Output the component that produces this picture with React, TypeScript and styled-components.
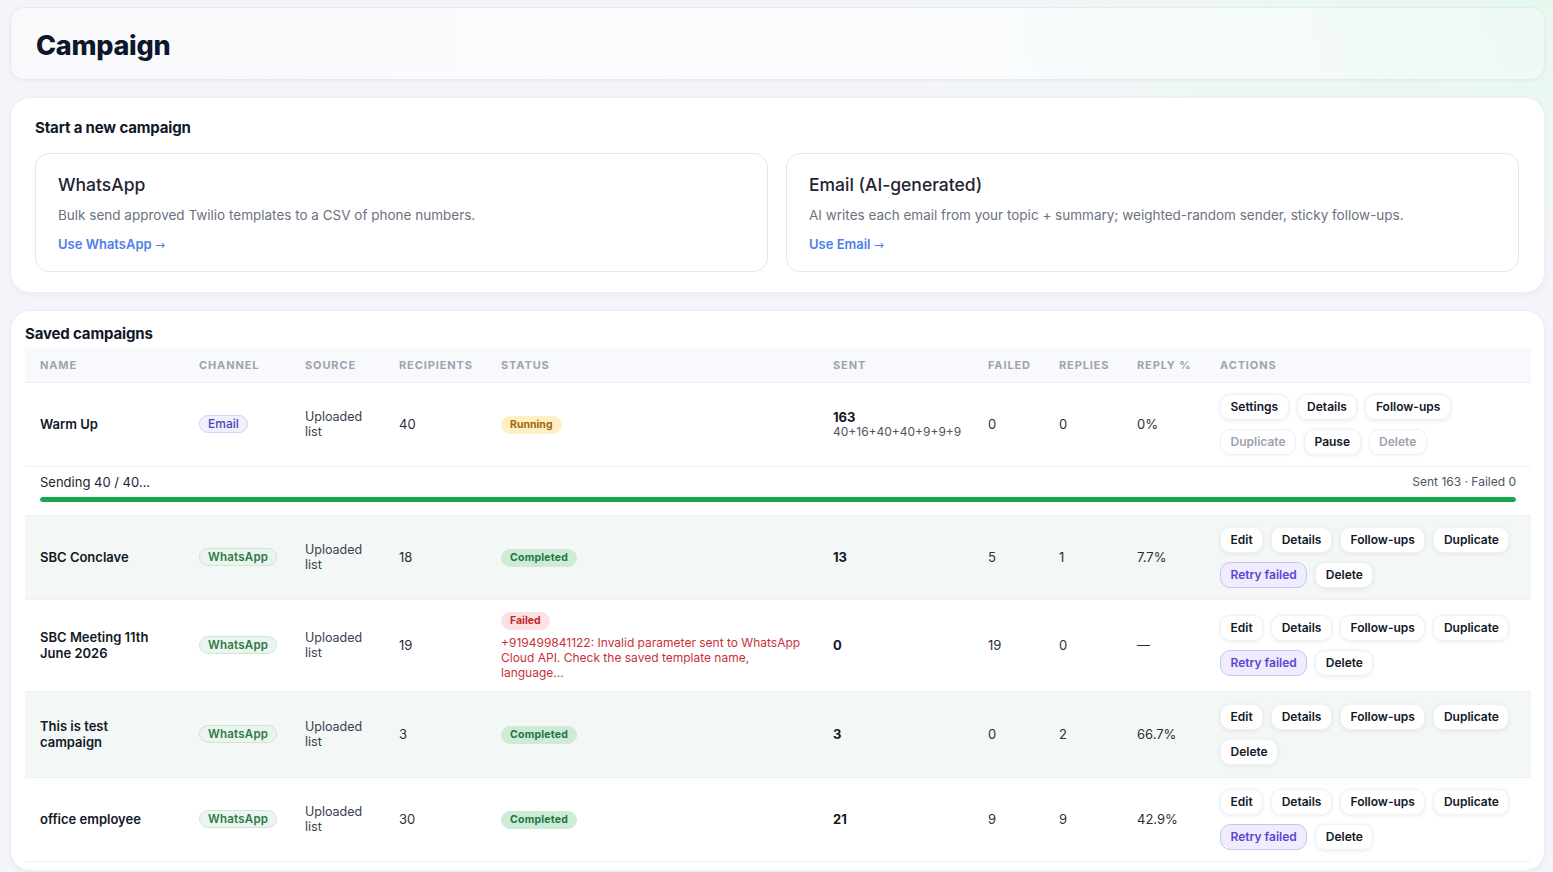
import React from "react";
import styled, { createGlobalStyle, css } from "styled-components";

const GlobalStyle = createGlobalStyle`
  * { box-sizing: border-box; }
  html, body { margin: 0; padding: 0; }
  body {
    font-family: Inter, "Noto Sans", Arial, sans-serif;
    color: #111827;
    background:
      radial-gradient(ellipse 700px 260px at 100% 0%, #e6f8ee 0%, rgba(230,248,238,0) 100%),
      #f4f5fa;
    min-height: 100vh;
  }
`;

const Page = styled.div`
  display: flex;
  flex-direction: column;
  gap: 17px;
  padding: 7px 8px 0 10px;
`;

const HeaderCard = styled.header`
  height: 73px;
  display: flex;
  align-items: center;
  padding: 4px 25px 0;
  border-radius: 14px;
  border: 1px solid #e7e9f0;
  background: linear-gradient(90deg, rgba(250,250,253,0.9) 0%, rgba(251,252,253,0.9) 60%, rgba(240,250,245,0.85) 100%);
  box-shadow: 0 1px 3px rgba(20, 30, 60, 0.05);
`;

const Title = styled.h1`
  margin: 0;
  font-size: 27px;
  font-weight: 800;
  letter-spacing: -0.01em;
  color: #0f172a;
`;

const Card = styled.section<{ $pad: string }>`
  background: #ffffff;
  border: 1px solid #eceef3;
  border-radius: 20px;
  box-shadow: 0 2px 6px rgba(20, 30, 60, 0.04);
  padding: ${(p) => p.$pad};
`;

const SectionTitle = styled.h2`
  margin: 0;
  font-size: 15px;
  line-height: 18px;
  font-weight: 700;
  letter-spacing: -0.01em;
  color: #111827;
`;

const OptionGrid = styled.div`
  display: grid;
  grid-template-columns: 1fr 1fr;
  gap: 18px;
  margin-top: 16px;
`;

const Option = styled.div`
  border: 1px solid #e6e8ee;
  border-radius: 14px;
  padding: 20px 22px 19px;
  height: 119px;
`;

const OptionTitle = styled.div`
  font-size: 17.5px;
  line-height: 22px;
  font-weight: 500;
  color: #1f2433;
`;

const OptionDesc = styled.div`
  margin-top: 9px;
  font-size: 13.5px;
  line-height: 20px;
  color: #6b7280;
`;

const OptionLink = styled.a`
  display: inline-block;
  margin-top: 10px;
  font-size: 13px;
  line-height: 18px;
  font-weight: 600;
  color: #4d7ee8;
  text-decoration: none;
`;

const Arrow = styled.span`
  font-family: "Noto Sans", "DejaVu Sans", sans-serif;
  font-weight: 400;
  font-size: 12px;
`;

const Table = styled.table`
  width: 100%;
  margin-top: 5px;
  border-collapse: collapse;
  table-layout: fixed;
`;

const Th = styled.th`
  height: 34px;
  padding: 0 15px;
  text-align: left;
  font-size: 11px;
  font-weight: 700;
  letter-spacing: 0.08em;
  color: #9ca3af;
  background: #f8f9fc;
  border-bottom: 1px solid #eceef3;
  white-space: nowrap;
`;

const Tr = styled.tr<{ $tint?: boolean }>`
  background: ${(p) => (p.$tint ? "#f3f7f5" : "#ffffff")};
  border-bottom: 1px solid #eef0f3;
`;

const Td = styled.td<{ $pad?: string }>`
  padding: ${(p) => p.$pad || "11px 15px"};
  vertical-align: middle;
  font-size: 13px;
  line-height: 16px;
  color: #2b2f38;
`;

const Name = styled.div`
  font-size: 13px;
  line-height: 16px;
  font-weight: 600;
  color: #111827;
`;

const Source = styled.div`
  font-size: 12.5px;
  line-height: 15px;
  color: #374151;
`;

type Tone = "email" | "whatsapp" | "running" | "completed" | "failed";

const tones: Record<Tone, ReturnType<typeof css>> = {
  email: css`
    background: #eef0fc;
    border-color: #cfd3f3;
    color: #4c44b8;
    font-weight: 500;
    font-size: 12px;
  `,
  whatsapp: css`
    background: #eaf5ee;
    border-color: #cfe5d6;
    color: #2f7a4a;
    font-weight: 600;
    font-size: 11.5px;
    letter-spacing: 0.02em;
  `,
  running: css`
    background: #fdf0c4;
    border-color: #fdf0c4;
    color: #a5650a;
    font-weight: 700;
    font-size: 10.5px;
  `,
  completed: css`
    background: #cdebd6;
    border-color: #cdebd6;
    color: #1d7641;
    font-weight: 700;
    font-size: 10.5px;
    letter-spacing: 0.02em;
  `,
  failed: css`
    background: #fde1e2;
    border-color: #fde1e2;
    color: #c0262d;
    font-weight: 700;
    font-size: 10.5px;
  `,
};

const Badge = styled.span<{ $tone: Tone }>`
  display: inline-flex;
  align-items: center;
  height: 18px;
  padding: 0 8px;
  border-radius: 999px;
  border: 1px solid transparent;
  white-space: nowrap;
  ${(p) => tones[p.$tone]}
`;

const ErrorText = styled.div`
  margin-top: 5px;
  font-size: 12px;
  line-height: 15px;
  color: #c7323a;
`;

const SentMain = styled.div`
  font-size: 13px;
  line-height: 16px;
  font-weight: 700;
  color: #111827;
`;

const SentSub = styled.div`
  font-size: 12px;
  line-height: 14px;
  color: #4b5563;
`;

const Actions = styled.div`
  display: flex;
  flex-wrap: wrap;
  gap: 9px 8px;
`;

type BtnKind = "default" | "muted" | "retry";

const Btn = styled.button<{ $kind?: BtnKind }>`
  height: 26px;
  padding: 0 9.5px;
  border-radius: 10px;
  font-family: inherit;
  font-size: 12px;
  font-weight: 600;
  white-space: nowrap;
  cursor: pointer;
  border: 1px solid #f0f1f4;
  background: #ffffff;
  color: #111827;
  box-shadow: 0 1px 4px rgba(20, 30, 60, 0.08);
  ${(p) =>
    p.$kind === "muted" &&
    css`
      color: #9ca3af;
      box-shadow: 0 1px 3px rgba(20, 30, 60, 0.04);
    `}
  ${(p) =>
    p.$kind === "retry" &&
    css`
      background: #efedfd;
      border-color: #cbc3f5;
      color: #5a45d4;
      box-shadow: none;
    `}
`;

const ProgressHead = styled.div`
  display: flex;
  justify-content: space-between;
  align-items: center;
`;

const ProgressLabel = styled.span`
  font-size: 13px;
  line-height: 16px;
  color: #1f2430;
`;

const ProgressMeta = styled.span`
  font-size: 12px;
  line-height: 16px;
  color: #4b5563;
`;

const Track = styled.div`
  margin-top: 7px;
  height: 5px;
  border-radius: 999px;
  background: #e5e7eb;
  overflow: hidden;
`;

const Fill = styled.div`
  height: 100%;
  border-radius: 999px;
  background: #18a64f;
`;

type Row = {
  name: string;
  recipients: number;
  status: "completed" | "failed";
  error?: string;
  sent: number;
  failed: number;
  replies: number;
  rate: string;
  retry: boolean;
  tint: boolean;
};

const rows: Row[] = [
  { name: "SBC Conclave", recipients: 18, status: "completed", sent: 13, failed: 5, replies: 1, rate: "7.7%", retry: true, tint: true },
  {
    name: "SBC Meeting 11th June 2026",
    recipients: 19,
    status: "failed",
    error: "+919499841122: Invalid parameter sent to WhatsApp Cloud API. Check the saved template name, language...",
    sent: 0,
    failed: 19,
    replies: 0,
    rate: "—",
    retry: true,
    tint: false,
  },
  { name: "This is test campaign", recipients: 3, status: "completed", sent: 3, failed: 0, replies: 2, rate: "66.7%", retry: false, tint: true },
  { name: "office employee", recipients: 30, status: "completed", sent: 21, failed: 9, replies: 9, rate: "42.9%", retry: true, tint: false },
];

const widths = [159, 106, 94, 102, 332, 155, 71, 78, 83, 326];
const heads = ["NAME", "CHANNEL", "SOURCE", "RECIPIENTS", "STATUS", "SENT", "FAILED", "REPLIES", "REPLY %", "ACTIONS"];

export default function App() {
  const progress = 100;
  return (
    <>
      <GlobalStyle />
      <Page>
        <HeaderCard>
          <Title>Campaign</Title>
        </HeaderCard>

        <Card $pad="21px 25px 20px 24px">
          <SectionTitle>Start a new campaign</SectionTitle>
          <OptionGrid>
            <Option>
              <OptionTitle>WhatsApp</OptionTitle>
              <OptionDesc>Bulk send approved Twilio templates to a CSV of phone numbers.</OptionDesc>
              <OptionLink href="#">Use WhatsApp <Arrow>→</Arrow></OptionLink>
            </Option>
            <Option>
              <OptionTitle>Email (AI-generated)</OptionTitle>
              <OptionDesc>AI writes each email from your topic + summary; weighted-random sender, sticky follow-ups.</OptionDesc>
              <OptionLink href="#">Use Email <Arrow>→</Arrow></OptionLink>
            </Option>
          </OptionGrid>
        </Card>

        <Card $pad="14px 13px 8px 14px">
          <SectionTitle>Saved campaigns</SectionTitle>
          <Table>
            <colgroup>
              {widths.map((w, i) => (
                <col key={i} style={{ width: w }} />
              ))}
            </colgroup>
            <thead>
              <tr>
                {heads.map((h) => (
                  <Th key={h}>{h}</Th>
                ))}
              </tr>
            </thead>
            <tbody>
              <Tr>
                <Td><Name>Warm Up</Name></Td>
                <Td><Badge $tone="email">Email</Badge></Td>
                <Td><Source>Uploaded list</Source></Td>
                <Td>40</Td>
                <Td><Badge $tone="running">Running</Badge></Td>
                <Td>
                  <SentMain>163</SentMain>
                  <SentSub>40+16+40+40+9+9+9</SentSub>
                </Td>
                <Td>0</Td>
                <Td>0</Td>
                <Td>0%</Td>
                <Td>
                  <Actions>
                    <Btn>Settings</Btn>
                    <Btn>Details</Btn>
                    <Btn>Follow-ups</Btn>
                    <Btn $kind="muted">Duplicate</Btn>
                    <Btn>Pause</Btn>
                    <Btn $kind="muted">Delete</Btn>
                  </Actions>
                </Td>
              </Tr>
              <Tr>
                <Td colSpan={10} $pad="7px 15px 13px">
                  <ProgressHead>
                    <ProgressLabel>Sending 40 / 40...</ProgressLabel>
                    <ProgressMeta>Sent 163 · Failed 0</ProgressMeta>
                  </ProgressHead>
                  <Track>
                    <Fill style={{ width: `${progress}%` }} />
                  </Track>
                </Td>
              </Tr>
              {rows.map((r) => (
                <Tr key={r.name} $tint={r.tint}>
                  <Td><Name>{r.name}</Name></Td>
                  <Td><Badge $tone="whatsapp">WhatsApp</Badge></Td>
                  <Td><Source>Uploaded list</Source></Td>
                  <Td>{r.recipients}</Td>
                  <Td>
                    {r.status === "completed" ? (
                      <Badge $tone="completed">Completed</Badge>
                    ) : (
                      <>
                        <Badge $tone="failed">Failed</Badge>
                        <ErrorText>{r.error}</ErrorText>
                      </>
                    )}
                  </Td>
                  <Td><SentMain>{r.sent}</SentMain></Td>
                  <Td>{r.failed}</Td>
                  <Td>{r.replies}</Td>
                  <Td>{r.rate}</Td>
                  <Td $pad={r.retry ? undefined : "12px 15px"}>
                    <Actions>
                      <Btn>Edit</Btn>
                      <Btn>Details</Btn>
                      <Btn>Follow-ups</Btn>
                      <Btn>Duplicate</Btn>
                      {r.retry && <Btn $kind="retry">Retry failed</Btn>}
                      <Btn>Delete</Btn>
                    </Actions>
                  </Td>
                </Tr>
              ))}
            </tbody>
          </Table>
        </Card>
      </Page>
    </>
  );
}
